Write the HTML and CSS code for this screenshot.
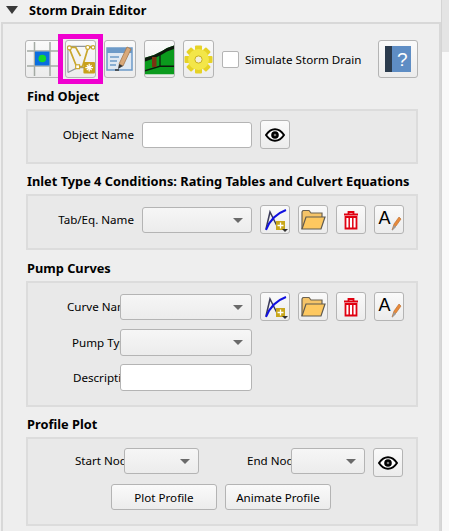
FILE: index.html
```html
<!DOCTYPE html>
<html lang="en">
<head>
    <meta charset="UTF-8">
    <title>Storm Drain Editor</title>
    <link rel="stylesheet" href="styles.css">
</head>
<body>
    <svg class="defs" width="0" height="0">
        <symbol id="eye" viewBox="0 0 20 14">
            <path d="M1 7C4 2.500 7 1.200 10 1.200S16 2.500 19 7C16 11.500 13 12.800 10 12.800S4 11.500 1 7Z" fill="#fff" stroke="#000" stroke-width="2"/>
            <circle cx="10" cy="7" r="3.800" fill="#000"/>
            <circle cx="10" cy="7" r="1.300" fill="#777"/>
        </symbol>
        <symbol id="curve" viewBox="0 0 28 27">
            <path d="M5 23L9 6L16 20" fill="none" stroke="#3c3c5a" stroke-width="1.500"/>
            <path d="M5 24C8 16 14 8 25 4" fill="none" stroke="#1010e0" stroke-width="2"/>
            <rect x="15" y="15" width="9" height="9" fill="#c9a71b"/>
            <path d="M19.500 16.500V22.500M16.500 19.500H22.500" stroke="#fff" stroke-width="1.300"/>
            <path d="M21 23H27L24 26Z" fill="#333"/>
        </symbol>
        <symbol id="folder" viewBox="0 0 26 22">
            <path d="M2 20V3L3 1.500H9L11 4H22V8" fill="#f5c468" stroke="#6b6252" stroke-width="1.200"/>
            <path d="M2 20L6 8H25L21 20Z" fill="#fdc860" stroke="#5f5a50" stroke-width="1.200"/>
        </symbol>
        <symbol id="trash" viewBox="0 0 16 20">
            <path d="M1 4.500H15M5.500 4V2H10.500V4" fill="none" stroke="#e00010" stroke-width="1.800"/>
            <path d="M2.500 7H13.500V18.500H2.500Z" fill="#fff" stroke="#e00010" stroke-width="1.800"/>
            <path d="M6.200 8V18M9.800 8V18" stroke="#e00010" stroke-width="1.500"/>
        </symbol>
        <symbol id="rename" viewBox="0 0 28 27">
            <text x="3.500" y="18" font-family="Liberation Sans, sans-serif" font-size="18" fill="#000">A</text>
            <path d="M17 24L19 18L24 11L26 13L21 20Z" fill="#e88a3a" stroke="#b76a2c" stroke-width=".6"/>
            <path d="M17 25L19 19L21 21Z" fill="#9a9a9a"/>
        </symbol>
    </svg>

    <div class="main">
        <div class="title"><span class="arrow"></span>Storm Drain Editor</div>

        <div class="panel">
            <div class="toolbar">
                <button class="btn tool-grid">
                    <svg width="35" height="36" viewBox="0 0 35 36">
                        <path d="M1 10H34M1 25H34M8.500 1V35M24 1V35" stroke="#a4aaa4" stroke-width="1.500"/>
                        <rect x="9" y="10.500" width="14.500" height="14" fill="#0a6fe0"/>
                        <circle cx="16.300" cy="17.500" r="3.800" fill="#16d92a"/>
                    </svg>
                </button>
                <span class="selected">
                    <button class="btn tool">
                        <svg width="29" height="34" viewBox="0 0 30 34">
                            <path d="M2 31V4H27M2 31L12 26H19" fill="none" stroke="#8e949c" stroke-width="1.200"/>
                            <path d="M3 5L11 25H17L23 5M3 5H10L15 14" fill="none" stroke="#c9a72e" stroke-width="1.800"/>
                            <path d="M22 5H28" stroke="#c9a72e" stroke-width="1.800"/>
                            <g fill="#fff" stroke="#c9a72e" stroke-width="1.200">
                                <circle cx="3.500" cy="5.500" r="2"/>
                                <circle cx="22.500" cy="5" r="2"/>
                                <circle cx="28" cy="5" r="1.800"/>
                                <rect x="10" y="23" width="4" height="4"/>
                            </g>
                            <rect x="18" y="20" width="12" height="12" rx="1" fill="#c9a11c"/>
                            <path d="M24 22V30M20 26H28M21.500 23.500L26.500 28.500M26.500 23.500L21.500 28.500" stroke="#fff" stroke-width="1.300"/>
                        </svg>
                    </button>
                </span>
                <button class="btn tool tool-edit">
                    <svg width="30" height="30" viewBox="0 0 30 30">
                        <rect x="2" y="4" width="25" height="22" fill="#dfe8f2" stroke="#6d9ac8" stroke-width="1.500"/>
                        <rect x="2" y="4" width="25" height="5" fill="#6d9ac8"/>
                        <path d="M5 13H14M5 17H12M5 21H11" stroke="#6d9ac8" stroke-width="1.500"/>
                        <path d="M14 20L22 3L26 5L18 22Z" fill="#d9a878" stroke="#a6794c" stroke-width=".8"/>
                        <path d="M13 25L14 20L18 22Z" fill="#333"/>
                        <path d="M10 26H14" stroke="#333" stroke-width="1.500"/>
                    </svg>
                </button>
                <button class="btn tool">
                    <svg width="29" height="32" viewBox="0 0 29 32">
                        <path d="M0 14.700L9 12L17 8L22 5L29 2.500V31.300H0Z" fill="#0b9b1d"/>
                        <path d="M0 14.700L9 12L17 8L22 5L29 2.500V6L22 8.500L17 11.500L9 15.500L0 18.500Z" fill="#0c1a0c"/>
                        <path d="M0 27L15 22.500H29V24H15L0 28.500Z" fill="#0c1a0c"/>
                        <rect x="7" y="14" width="4.500" height="10" fill="#7a3312"/>
                        <path d="M15 11V23" stroke="#0c1a0c" stroke-width="1.200"/>
                    </svg>
                </button>
                <button class="btn tool">
                    <svg width="29" height="29" viewBox="-14.500 -14.500 29 29">
                        <g fill="#e6d226">
                            <rect x="-3.500" y="-14" width="7" height="28" rx="1"/>
                            <rect x="-3.500" y="-14" width="7" height="28" rx="1" transform="rotate(45)"/>
                            <rect x="-3.500" y="-14" width="7" height="28" rx="1" transform="rotate(90)"/>
                            <rect x="-3.500" y="-14" width="7" height="28" rx="1" transform="rotate(135)"/>
                        </g>
                        <circle r="10.500" fill="#f3e648"/>
                        <circle r="3.600" fill="#f4f1dc" stroke="#c9b020"/>
                    </svg>
                </button>
                <label class="check"><span class="box"></span>Simulate Storm Drain</label>
                <button class="btn help">
                    <svg width="26" height="28" viewBox="0 0 26 28">
                        <rect x="0" y="1" width="26" height="26" fill="#5e8dc4"/>
                        <rect x="0" y="1" width="7" height="26" fill="#2b3b4d"/>
                        <text x="12" y="21" font-family="Liberation Sans, sans-serif" font-size="19" fill="#fff">?</text>
                    </svg>
                </button>
            </div>

            <h2 class="group-title">Find Object</h2>
            <div class="group find">
                <div class="row">
                    <span class="label label-name">Object Name</span>
                    <input class="field w-110" type="text">
                    <button class="btn icon"><svg width="20" height="14"><use href="#eye"/></svg></button>
                </div>
            </div>

            <h2 class="group-title">Inlet Type 4 Conditions: Rating Tables and Culvert Equations</h2>
            <div class="group inlet">
                <div class="row">
                    <span class="label label-name">Tab/Eq. Name</span>
                    <span class="combo w-110"></span>
                    <button class="btn icon"><svg width="28" height="27"><use href="#curve"/></svg></button>
                    <button class="btn icon"><svg width="26" height="22"><use href="#folder"/></svg></button>
                    <button class="btn icon"><svg width="16" height="20"><use href="#trash"/></svg></button>
                    <button class="btn icon"><svg width="28" height="27"><use href="#rename"/></svg></button>
                </div>
            </div>

            <h2 class="group-title">Pump Curves</h2>
            <div class="group pump">
                <div class="row">
                    <span class="label label-pump pad-curve">Curve Name</span>
                    <span class="combo w-132"></span>
                    <button class="btn icon"><svg width="28" height="27"><use href="#curve"/></svg></button>
                    <button class="btn icon"><svg width="26" height="22"><use href="#folder"/></svg></button>
                    <button class="btn icon"><svg width="16" height="20"><use href="#trash"/></svg></button>
                    <button class="btn icon"><svg width="28" height="27"><use href="#rename"/></svg></button>
                </div>
                <div class="row row-low">
                    <span class="label label-pump pad-type">Pump Type</span>
                    <span class="combo w-132"></span>
                </div>
                <div class="row row-low">
                    <span class="label label-pump pad-desc">Description</span>
                    <input class="field w-132" type="text">
                </div>
            </div>

            <h2 class="group-title">Profile Plot</h2>
            <div class="group profile">
                <div class="row row-top">
                    <span class="label label-start">Start Node</span>
                    <span class="combo w-75"></span>
                    <span class="label label-end">End Node</span>
                    <span class="combo w-74"></span>
                    <button class="btn icon"><svg width="20" height="14"><use href="#eye"/></svg></button>
                </div>
                <div class="actions">
                    <button class="btn push">Plot Profile</button>
                    <button class="btn push">Animate Profile</button>
                </div>
            </div>
        </div>
    </div>

    <div class="scrollbar">
        <div class="scroll-track"></div>
        <div class="scroll-thumb"></div>
    </div>
</body>
</html>
```

FILE: styles.css
```css
* {
    box-sizing: border-box;
}

html, body {
    height: 531px;
    overflow: hidden;
}

body {
    display: flex;
    margin: 0;
    background-color: #f0f0f0;
    font-family: "Noto Sans", sans-serif;
    font-size: 11.6px;
    color: #000;
}

.defs {
    position: absolute;
}

.main {
    flex: none;
    width: 441px;
}

.title {
    display: flex;
    align-items: center;
    height: 19px;
    margin-bottom: 3px;
    padding-left: 6px;
    font-weight: bold;
    font-size: 12.7px;
}

.arrow {
    width: 0;
    height: 0;
    margin-right: 11px;
    border-left: 6.500px solid transparent;
    border-right: 6.500px solid transparent;
    border-top: 8px solid #3a3a3a;
}

.panel {
    height: 509px;
    margin-left: 1px;
    padding: 16px 0 0 23px;
    border: 2px solid #d8d8d8;
    border-bottom: 0;
    background-color: #eeeeee;
}

.toolbar {
    display: flex;
    align-items: center;
    width: 392px;
    height: 38px;
    margin-bottom: 12px;
}

.btn {
    display: flex;
    align-items: center;
    justify-content: center;
    padding: 0;
    border: 1px solid #b4b4b4;
    border-radius: 3px;
    background: linear-gradient(#fafafa, #ececec);
    font: inherit;
    color: inherit;
}

.tool-grid {
    flex: none;
    width: 37px;
    height: 38px;
    margin-left: -1px;
}

.tool {
    flex: none;
    width: 31px;
    height: 38px;
    margin-right: 8px;
    overflow: hidden;
}

.tool-edit {
    width: 32px;
}

.selected {
    display: flex;
    flex: none;
    margin: -6px 1px -6px -4px;
    padding: 6px 7px;
    outline: 5px solid #f000d0;
    outline-offset: -5px;
}

.selected .tool {
    margin-right: 0;
}

.check {
    display: flex;
    align-items: center;
}

.box {
    width: 17px;
    height: 17px;
    margin-right: 6px;
    border: 1px solid #b4b4b4;
    border-radius: 2px;
    background-color: #fff;
}

.help {
    flex: none;
    width: 40px;
    height: 38px;
    margin-left: auto;
}

.group-title {
    height: 13px;
    margin: 0 0 0 1px;
    font-size: 12.8px;
    line-height: 13px;
    font-weight: bold;
}

.group {
    width: 392px;
    margin-top: 6px;
    padding-top: 9px;
    border: 2px solid #dcdcdc;
    background-color: #e9e9e9;
}

.find {
    height: 55px;
    margin-bottom: 11px;
}

.inlet {
    height: 56px;
    margin-bottom: 12px;
}

.pump {
    height: 126px;
    margin-bottom: 11px;
}

.profile {
    height: 89px;
}

.row {
    display: flex;
    align-items: center;
    height: 29px;
}

.row-low {
    height: 27px;
    margin-top: 8px;
}

.row-top {
    align-items: flex-start;
    height: 28px;
}

.label {
    display: block;
    flex: none;
    overflow: hidden;
    white-space: nowrap;
}

.row-top .label {
    line-height: 26px;
}

.label-name {
    width: 114px;
    padding-right: 8px;
    text-align: right;
}

.label-pump {
    width: 92px;
}

.pad-curve {
    padding-left: 39px;
}

.pad-type {
    padding-left: 44px;
}

.pad-desc {
    padding-left: 45px;
}

.label-start {
    width: 96px;
    padding-left: 47px;
}

.label-end {
    width: 92px;
    padding-left: 48px;
}

.field,
.combo {
    display: block;
    flex: none;
    height: 26px;
    border: 1px solid #b4b4b4;
    border-radius: 3px;
}

.row-low .field,
.row-low .combo {
    height: 27px;
}

.field {
    background-color: #fff;
}

.combo {
    position: relative;
    background: linear-gradient(#f6f6f6, #ececec);
}

/* dropdown arrow */
.combo::after {
    content: "";
    position: absolute;
    right: 8px;
    top: 10px;
    border-left: 5px solid transparent;
    border-right: 5px solid transparent;
    border-top: 5px solid #6a6a6a;
}

.w-110 {
    width: 110px;
}

.w-132 {
    width: 132px;
}

.w-75 {
    width: 75px;
}

.w-74 {
    width: 74px;
}

.icon {
    flex: none;
    width: 30px;
    height: 29px;
    margin-left: 8px;
}

.actions {
    display: flex;
    gap: 8px;
    margin-top: 8px;
    padding-left: 83px;
}

.push {
    width: 106px;
    height: 26px;
}

.scrollbar {
    display: flex;
    flex-direction: column;
    flex: none;
    width: 8px;
    border-left: 1px solid #d4d4d4;
}

.scroll-track {
    height: 52px;
    background-color: #e4e4e4;
}

.scroll-thumb {
    flex: 1;
    background-color: #f9f9f9;
}
```
